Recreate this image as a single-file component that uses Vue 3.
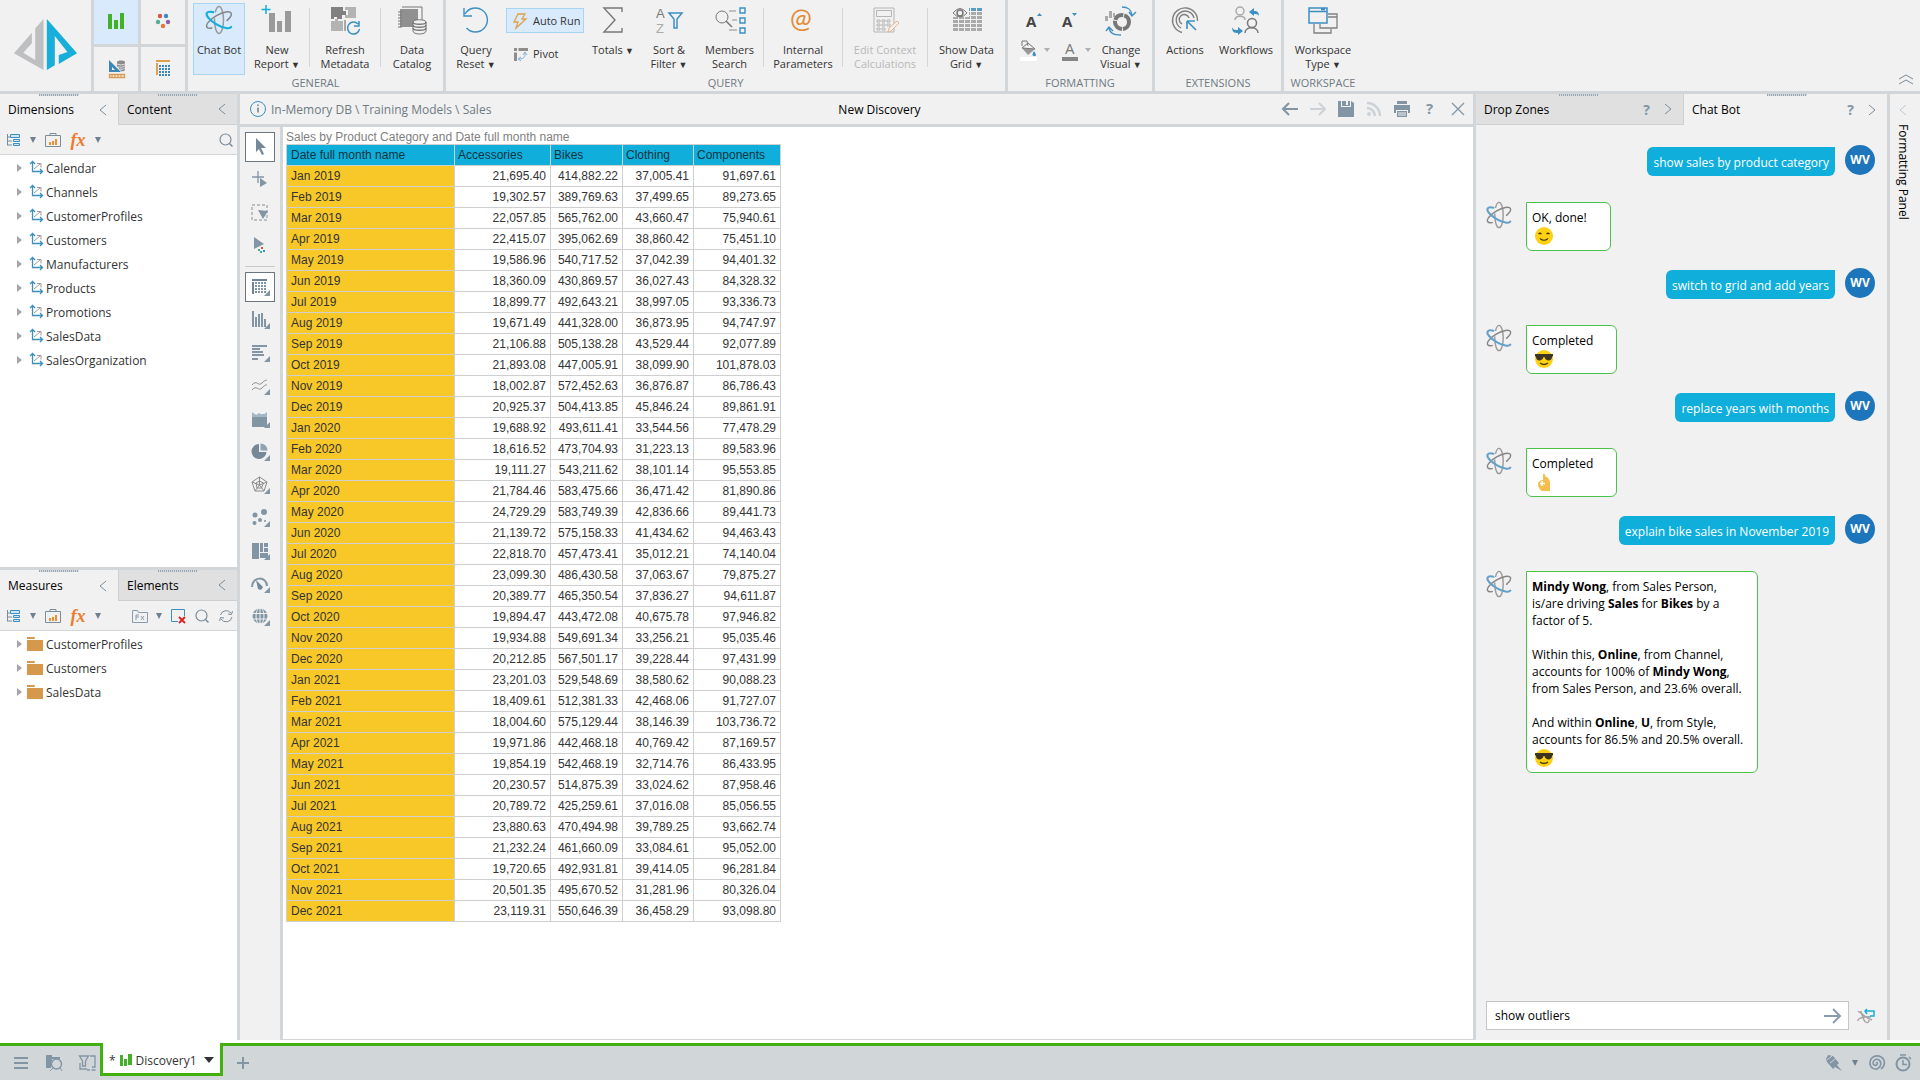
<template>
   <div class="app">
      <header class="ribbon">
         <div class="logo">
            <svg viewBox="0 0 274 270" width="91" height="90">
               <path fill="#bdbfc1" d="M96 98L42 160L131 210V57L106 85V180L70 158L96 130Z" />
               <path fill="#17aeda" d="M141 57L232 160L177 192V165L203 156L165 108V196L141 210Z" />
            </svg>
         </div>
         <div class="modes">
            <button
               v-for="mode in modes"
               :key="mode"
               class="mode"
               :class="{ active: mode === 'discover' }"
               :aria-label="mode"
            >
               <svg viewBox="0 0 20 20" width="20" height="20" v-html="icons[mode]"></svg>
            </button>
         </div>
         <section v-for="group in ribbon" :key="group.title" class="group">
            <div class="group-items">
               <template v-for="item in group.items" :key="item.name">
                  <div v-if="item.type === 'run'" class="run-tools">
                     <button class="run-button active">
                        <svg viewBox="0 0 18 18" width="18" height="18" v-html="icons.bolt"></svg>
                        Auto Run
                     </button>
                     <button class="run-button">
                        <svg viewBox="0 0 18 18" width="18" height="18" v-html="icons.pivot"></svg>
                        Pivot
                     </button>
                  </div>
                  <div v-else-if="item.type === 'font'" class="font-tools">
                     <button aria-label="Increase font">
                        <svg viewBox="0 0 22 20" width="22" height="20">
                           <text x="6" y="14" class="font-letter">A</text>
                           <path d="M17 3l2.500-3 2.500 3z" fill="#3b8fc2" />
                        </svg>
                     </button>
                     <button aria-label="Decrease font">
                        <svg viewBox="0 0 22 20" width="22" height="20">
                           <text x="1" y="14" class="font-letter">A</text>
                           <path d="M11 0h5l-2.500 3z" fill="#3b8fc2" />
                        </svg>
                     </button>
                     <button class="with-caret" aria-label="Fill colour">
                        <svg viewBox="0 0 18 22" width="18" height="22" v-html="icons.bucket"></svg>
                        <span class="soft-caret"></span>
                     </button>
                     <button class="with-caret" aria-label="Font colour">
                        <svg viewBox="0 0 18 22" width="18" height="22">
                           <text x="4" y="15" class="color-letter">A</text>
                           <path d="M1 18h16v4H1z" fill="#858585" />
                        </svg>
                        <span class="soft-caret"></span>
                     </button>
                  </div>
                  <span v-else-if="item.type === 'line'" class="group-line"></span>
                  <button
                     v-else
                     class="tool"
                     :class="{ active: item.active }"
                     :disabled="item.disabled"
                     :style="{ width: item.width + 'px' }"
                  >
                     <svg viewBox="0 0 32 32" width="32" height="32" v-html="icons[item.icon]"></svg>
                     <span class="tool-label">
                        <span v-for="(line, i) in item.label" :key="line">
                           {{ line }}<i v-if="item.menu && i === item.label.length - 1"> ▼</i>
                        </span>
                     </span>
                  </button>
               </template>
            </div>
            <div class="group-title">{{ group.title }}</div>
         </section>
         <button class="collapse" aria-label="Collapse ribbon">
            <svg viewBox="0 0 16 12" width="16" height="12">
               <path d="M1 6l7-4 7 4M1 11l7-4 7 4" fill="none" stroke="#7c8a96" />
            </svg>
         </button>
      </header>

      <main class="workspace">
         <aside class="side">
            <section v-for="panel in panels" :key="panel.tabs[0]" class="side-panel">
               <div class="tabs">
                  <button
                     v-for="(tab, i) in panel.tabs"
                     :key="tab"
                     class="tab"
                     :class="{ inactive: i > 0 }"
                  >
                     {{ tab }}
                     <svg class="chevron" viewBox="0 0 8 12" width="8" height="12">
                        <path d="M7 1L1 6l6 5" />
                     </svg>
                  </button>
               </div>
               <div class="panel-tools">
                  <button aria-label="Tree view">
                     <svg viewBox="0 0 16 16" width="16" height="16" v-html="icons.tree"></svg>
                  </button>
                  <span class="caret"></span>
                  <button aria-label="Quick chart">
                     <svg viewBox="0 0 16 16" width="16" height="16" v-html="icons.case"></svg>
                  </button>
                  <button class="fx" aria-label="Formula">fx</button>
                  <span class="caret"></span>
                  <div class="panel-tools-right">
                     <template v-if="panel.full">
                        <button aria-label="Folder">
                           <svg viewBox="0 0 16 16" width="16" height="16" v-html="icons.fxFolder"></svg>
                        </button>
                        <span class="caret"></span>
                        <button aria-label="Delete">
                           <svg viewBox="0 0 16 16" width="16" height="16" v-html="icons.remove"></svg>
                        </button>
                     </template>
                     <button aria-label="Search">
                        <svg viewBox="0 0 16 16" width="16" height="16" v-html="icons.search"></svg>
                     </button>
                     <button v-if="panel.full" aria-label="Refresh">
                        <svg viewBox="0 0 16 16" width="16" height="16" v-html="icons.sync"></svg>
                     </button>
                  </div>
               </div>
               <ul class="tree">
                  <li v-for="name in panel.items" :key="name">
                     <span class="expander"></span>
                     <svg viewBox="0 0 16 16" width="16" height="16" v-html="icons[panel.icon]"></svg>
                     {{ name }}
                  </li>
               </ul>
            </section>
         </aside>

         <section class="discovery">
            <div class="discovery-header">
               <div class="path">
                  <svg viewBox="0 0 18 18" width="18" height="18">
                     <circle cx="9" cy="9" r="7.500" fill="none" stroke="#3b8fc2" />
                     <path d="M9 7.500v5M9 4.500v1.500" stroke="#6f7f8c" stroke-width="1.500" />
                  </svg>
                  In-Memory DB \ Training Models \ Sales
               </div>
               <h1>New Discovery</h1>
               <div class="header-actions">
                  <button v-for="name in headerActions" :key="name" :aria-label="name">
                     <svg viewBox="0 0 18 18" width="18" height="18" v-html="icons[name]"></svg>
                  </button>
               </div>
            </div>
            <div class="discovery-body">
               <nav class="visuals">
                  <template v-for="name in visuals" :key="name">
                     <span v-if="name === 'line'" class="visual-line"></span>
                     <button
                        v-else
                        class="visual"
                        :class="{ selected: name === 'pointer' || name === 'grid' }"
                        :aria-label="name"
                     >
                        <svg viewBox="0 0 20 20" width="20" height="20" v-html="icons[name]"></svg>
                     </button>
                  </template>
               </nav>
               <div class="canvas">
                  <table>
                     <caption>Sales by Product Category and Date full month name</caption>
                     <thead>
                        <tr>
                           <th v-for="column in columns" :key="column" scope="col">{{ column }}</th>
                        </tr>
                     </thead>
                     <tbody>
                        <tr v-for="row in rows" :key="row[0]">
                           <th scope="row">{{ row[0] }}</th>
                           <td v-for="value in row.slice(1)" :key="value">{{ value }}</td>
                        </tr>
                     </tbody>
                  </table>
               </div>
            </div>
         </section>

         <aside class="chat">
            <div class="tabs">
               <button class="tab inactive">
                  Drop Zones
                  <span class="help">?</span>
                  <svg class="chevron" viewBox="0 0 8 12" width="8" height="12">
                     <path d="M1 1l6 5-6 5" />
                  </svg>
               </button>
               <button class="tab">
                  Chat Bot
                  <span class="help">?</span>
                  <svg class="chevron" viewBox="0 0 8 12" width="8" height="12">
                     <path d="M1 1l6 5-6 5" />
                  </svg>
               </button>
            </div>
            <div class="messages">
               <div v-for="(message, i) in messages" :key="i" class="message" :class="message.from">
                  <template v-if="message.from === 'user'">
                     <div class="bubble">{{ message.text }}</div>
                     <div class="avatar">WV</div>
                  </template>
                  <template v-else>
                     <svg class="bot" viewBox="0 0 32 32" width="30" height="30" v-html="icons.atom"></svg>
                     <div class="bubble" :class="{ long: message.long }">
                        <p v-for="(line, n) in message.lines" :key="n">
                           <component
                              :is="part.bold ? 'b' : 'span'"
                              v-for="(part, k) in splitBold(line)"
                              :key="k"
                              >{{ part.text }}</component
                           >
                        </p>
                        <svg class="emoji" viewBox="0 0 18 18" width="18" height="18" v-html="icons[message.emoji]"></svg>
                     </div>
                  </template>
               </div>
            </div>
            <form class="ask" @submit.prevent="send">
               <div class="ask-box">
                  <input v-model="question" type="text" aria-label="Ask the chat bot" />
                  <button type="submit" aria-label="Send">
                     <svg viewBox="0 0 18 16" width="18" height="16">
                        <path d="M0 8h16M9 1l7 7-7 7" fill="none" stroke="#8a9cab" stroke-width="2" />
                     </svg>
                  </button>
               </div>
               <button type="button" aria-label="Reset chat">
                  <svg viewBox="0 0 18 18" width="18" height="18" v-html="icons.resetBot"></svg>
               </button>
            </form>
         </aside>

         <aside class="formatting">
            <svg class="chevron" viewBox="0 0 8 12" width="8" height="12">
               <path d="M7 1L1 6l6 5" />
            </svg>
            <span>Formatting Panel</span>
         </aside>
      </main>

      <footer class="status">
         <div class="status-left">
            <button v-for="name in ['menu', 'browse', 'flow']" :key="name" :aria-label="name">
               <svg viewBox="0 0 18 18" width="18" height="18" v-html="icons[name]"></svg>
            </button>
         </div>
         <button class="document">
            <span>*</span>
            <svg viewBox="0 0 12 12" width="12" height="12">
               <path d="M0 1h3v11H0zM4 5h3v7H4zM8 0h4v11H8z" fill="#43b02a" />
            </svg>
            Discovery1
            <i></i>
         </button>
         <button class="add" aria-label="Add">
            <svg viewBox="0 0 12 12" width="12" height="12">
               <path d="M6 0v12M0 6h12" stroke="#8195a5" stroke-width="2" />
            </svg>
         </button>
         <div class="status-right">
            <button aria-label="Pin">
               <svg viewBox="0 0 18 18" width="18" height="18" v-html="icons.pin"></svg>
            </button>
            <span class="caret"></span>
            <button aria-label="Activity">
               <svg viewBox="0 0 18 18" width="18" height="18" v-html="icons.spiral"></svg>
            </button>
            <button aria-label="Timer">
               <svg viewBox="0 0 18 18" width="18" height="18" v-html="icons.timer"></svg>
            </button>
         </div>
      </footer>
   </div>
</template>

<script setup>
import { ref } from "vue";

const question = ref("show outliers");

const modes = ["discover", "present", "model", "tabulate"];

const ribbon = [
   {
      title: "GENERAL",
      items: [
         { name: "chat", icon: "atomBlue", label: ["Chat Bot"], width: 52, active: true },
         { name: "report", icon: "report", label: ["New", "Report"], width: 64, menu: true },
         { name: "l1", type: "line" },
         { name: "meta", icon: "metadata", label: ["Refresh", "Metadata"], width: 70 },
         { name: "l2", type: "line" },
         { name: "catalog", icon: "catalog", label: ["Data", "Catalog"], width: 62 },
      ],
   },
   {
      title: "QUERY",
      items: [
         { name: "reset", icon: "undo", label: ["Query", "Reset"], width: 60, menu: true },
         { name: "run", type: "run" },
         { name: "totals", icon: "sigma", label: ["Totals"], width: 58, menu: true },
         { name: "sort", icon: "sort", label: ["Sort &", "Filter"], width: 54, menu: true },
         { name: "members", icon: "members", label: ["Members", "Search"], width: 67 },
         { name: "l1", type: "line" },
         { name: "params", icon: "at", label: ["Internal", "Parameters"], width: 78 },
         { name: "l2", type: "line" },
         { name: "context", icon: "calc", label: ["Edit Context", "Calculations"], width: 84, disabled: true },
         { name: "l3", type: "line" },
         { name: "grid", icon: "dataGrid", label: ["Show Data", "Grid"], width: 77, menu: true },
      ],
   },
   {
      title: "FORMATTING",
      items: [
         { name: "font", type: "font" },
         { name: "visual", icon: "change", label: ["Change", "Visual"], width: 62, menu: true },
      ],
   },
   {
      title: "EXTENSIONS",
      items: [
         { name: "actions", icon: "actions", label: ["Actions"], width: 60 },
         { name: "workflows", icon: "workflows", label: ["Workflows"], width: 62 },
      ],
   },
   {
      title: "WORKSPACE",
      items: [{ name: "type", icon: "windows", label: ["Workspace", "Type"], width: 78, menu: true }],
   },
];

const panels = [
   {
      tabs: ["Dimensions", "Content"],
      icon: "axes",
      items: [
         "Calendar",
         "Channels",
         "CustomerProfiles",
         "Customers",
         "Manufacturers",
         "Products",
         "Promotions",
         "SalesData",
         "SalesOrganization",
      ],
   },
   {
      tabs: ["Measures", "Elements"],
      icon: "folder",
      full: true,
      items: ["CustomerProfiles", "Customers", "SalesData"],
   },
];

const headerActions = ["back", "forward", "save", "feed", "print", "question", "close"];

const visuals = [
   "pointer",
   "addPointer",
   "marquee",
   "dotPointer",
   "line",
   "grid",
   "columns",
   "bars",
   "lines",
   "area",
   "pie",
   "radar",
   "scatter",
   "treemap",
   "gauge",
   "globe",
];

const columns = ["Date full month name", "Accessories", "Bikes", "Clothing", "Components"];

const rows = [
   ["Jan 2019", "21,695.40", "414,882.22", "37,005.41", "91,697.61"],
   ["Feb 2019", "19,302.57", "389,769.63", "37,499.65", "89,273.65"],
   ["Mar 2019", "22,057.85", "565,762.00", "43,660.47", "75,940.61"],
   ["Apr 2019", "22,415.07", "395,062.69", "38,860.42", "75,451.10"],
   ["May 2019", "19,586.96", "540,717.52", "37,042.39", "94,401.32"],
   ["Jun 2019", "18,360.09", "430,869.57", "36,027.43", "84,328.32"],
   ["Jul 2019", "18,899.77", "492,643.21", "38,997.05", "93,336.73"],
   ["Aug 2019", "19,671.49", "441,328.00", "36,873.95", "94,747.97"],
   ["Sep 2019", "21,106.88", "505,138.28", "43,529.44", "92,077.89"],
   ["Oct 2019", "21,893.08", "447,005.91", "38,099.90", "101,878.03"],
   ["Nov 2019", "18,002.87", "572,452.63", "36,876.87", "86,786.43"],
   ["Dec 2019", "20,925.37", "504,413.85", "45,846.24", "89,861.91"],
   ["Jan 2020", "19,688.92", "493,611.41", "33,544.56", "77,478.29"],
   ["Feb 2020", "18,616.52", "473,704.93", "31,223.13", "89,583.96"],
   ["Mar 2020", "19,111.27", "543,211.62", "38,101.14", "95,553.85"],
   ["Apr 2020", "21,784.46", "583,475.66", "36,471.42", "81,890.86"],
   ["May 2020", "24,729.29", "583,749.39", "42,836.66", "89,441.73"],
   ["Jun 2020", "21,139.72", "575,158.33", "41,434.62", "94,463.43"],
   ["Jul 2020", "22,818.70", "457,473.41", "35,012.21", "74,140.04"],
   ["Aug 2020", "23,099.30", "486,430.58", "37,063.67", "79,875.27"],
   ["Sep 2020", "20,389.77", "465,350.54", "37,836.27", "94,611.87"],
   ["Oct 2020", "19,894.47", "443,472.08", "40,675.78", "97,946.82"],
   ["Nov 2020", "19,934.88", "549,691.34", "33,256.21", "95,035.46"],
   ["Dec 2020", "20,212.85", "567,501.17", "39,228.44", "97,431.99"],
   ["Jan 2021", "23,201.03", "529,548.69", "38,580.62", "90,088.23"],
   ["Feb 2021", "18,409.61", "512,381.33", "42,468.06", "91,727.07"],
   ["Mar 2021", "18,004.60", "575,129.44", "38,146.39", "103,736.72"],
   ["Apr 2021", "19,971.86", "442,468.18", "40,769.42", "87,169.57"],
   ["May 2021", "19,854.19", "542,468.19", "32,714.76", "86,433.95"],
   ["Jun 2021", "20,230.57", "514,875.39", "33,024.62", "87,958.46"],
   ["Jul 2021", "20,789.72", "425,259.61", "37,016.08", "85,056.55"],
   ["Aug 2021", "23,880.63", "470,494.98", "39,789.25", "93,662.74"],
   ["Sep 2021", "21,232.24", "461,660.09", "33,084.61", "95,052.00"],
   ["Oct 2021", "19,720.65", "492,931.81", "39,414.05", "96,281.84"],
   ["Nov 2021", "20,501.35", "495,670.52", "31,281.96", "80,326.04"],
   ["Dec 2021", "23,119.31", "550,646.39", "36,458.29", "93,098.80"],
];

const messages = ref([
   { from: "user", text: "show sales by product category" },
   { from: "reply", lines: ["OK, done!"], emoji: "smile" },
   { from: "user", text: "switch to grid and add years" },
   { from: "reply", lines: ["Completed"], emoji: "cool" },
   { from: "user", text: "replace years with months" },
   { from: "reply", lines: ["Completed"], emoji: "okHand" },
   { from: "user", text: "explain bike sales in November 2019" },
   {
      from: "reply",
      long: true,
      emoji: "cool",
      lines: [
         "*Mindy Wong*, from Sales Person,",
         "is/are driving *Sales* for *Bikes* by a",
         "factor of 5.",
         "",
         "Within this, *Online*, from Channel,",
         "accounts for 100% of *Mindy Wong*,",
         "from Sales Person, and 23.6% overall.",
         "",
         "And within *Online*, *U*, from Style,",
         "accounts for 86.5% and 20.5% overall.",
      ],
   },
]);

// every odd piece between asterisks is bold
const splitBold = (line) => line.split("*").map((text, i) => ({ text, bold: i % 2 === 1 }));

const send = () => {
   if (!question.value) return;
   messages.value.push({ from: "user", text: question.value });
   question.value = "";
};

// three crossed orbits, each one left open
const atom = (blue) => `
   <g fill="none" stroke-linecap="round">
      <ellipse cx="16" cy="16" rx="13.500" ry="4.500" transform="rotate(90 16 16)" stroke="#9a9a9a" stroke-width="1.500" stroke-dasharray="16 7 40"/>
      <ellipse cx="16" cy="16" rx="14" ry="5" transform="rotate(-30 16 16)" stroke="#858585" stroke-width="1.500" stroke-dasharray="9 17 50"/>
      <ellipse cx="16" cy="16" rx="14" ry="5" transform="rotate(30 16 16)" stroke="${blue}" stroke-width="2.200" stroke-dasharray="38 60"/>
   </g>`;

const corner = '<path d="M20 13v6h-6z" fill="#8195a5"/>';

const face = '<circle cx="9" cy="9" r="9" fill="#fcd116"/>';

const gridCells = () => {
   let cells = "";
   for (let y = 0; y < 6; y++) {
      for (let x = 0; x < 5; x++) {
         cells += `<path d="M${2 + x * 6} ${4 + y * 4}h5v3h-5z" fill="${y === 0 && x > 1 ? "#5b9cc7" : "#aaa"}"/>`;
      }
   }
   return cells;
};

const dots = (color, from, step, size) => {
   let out = "";
   for (let y = 0; y < 4; y++) {
      for (let x = 0; x < 4; x++) {
         out += `<path d="M${from + x * step} ${from + y * step}h${size}v${size}h-${size}z" fill="${color}"/>`;
      }
   }
   return out;
};

const icons = {
   discover: '<path d="M2 2h4v15H2zM8 8h4v9H8zM14 1h4v16h-4z" fill="#43b02a"/>',
   present:
      '<circle cx="7" cy="4" r="2.200" fill="#d9534a"/><circle cx="13" cy="4" r="2.200" fill="#3f87c6"/><circle cx="5" cy="10" r="2.200" fill="#55ad96"/><circle cx="15" cy="10" r="2.200" fill="#8e5ea9"/><circle cx="10" cy="14" r="2.200" fill="#e2763c"/>',
   model:
      '<path d="M11 3c0-2 8-2 8 0v8c-1 2-4 1-4 1l-4-5z" fill="#8b8b8b"/><path d="M11 5q4 2 8 0M12 8q4 1 7-1M14 10q3 1 5-1" stroke="#e0e0e0" fill="none"/><path d="M3 1v12h12zM6 8l3 3H6z" fill="#3b87ba" fill-rule="evenodd"/><path d="M3.500 15.500h15v3h-15zM6 16v1.500M9 16v1.500M12 16v1.500M15 16v1.500" stroke="#d79a4e" fill="none" stroke-width="1.300"/>',
   tabulate:
      '<path d="M3 1h14v2H3zM3 4h2v12H3z" fill="#dca052"/>' + dots("#3b87ba", 6, 3, 2),
   atom: atom("#63a1c9"),
   atomBlue: atom("#15aeda"),
   report:
      '<path d="M5 1v9M0.500 5.500h9" stroke="#15aeda" stroke-width="1.500"/><path d="M8 9h6v19H8zM16 17h5v11h-5zM24 7h6v21h-6z" fill="#9a9a9a"/>',
   metadata:
      '<path d="M2 3h12v4h3v4h-4v4H8v-2H5v2H2z" fill="#808080"/><path d="M16 3h11v11H16v-3h3V6h-3zM2 17h4v-2h3v2h5v10H2z" fill="#b3b3b3"/><path d="M18 16h-3v11h3z" fill="#a8a8a8"/><path d="M17 16h14v14H17z" fill="#f1f1f1"/><path d="M29 20a6 6 0 1 0 1.500 5M30 17v5h-5" fill="none" stroke="#3b8fc2" stroke-width="1.500"/>',
   catalog:
      '<path d="M4 5h18v18H4z" fill="#909090"/><path d="M6 3h20v14M2 8h4M2 11h4M2 14h4M2 17h4M2 20h4M2 23h4" stroke="#777" fill="none"/><path d="M17 18v9c0 4 13 4 13 0v-9c0-3-13-3-13 0z" fill="#f1f1f1" stroke="#777"/><path d="M17 18c0 3 13 3 13 0M17 21c0 3 13 3 13 0M17 24c0 3 13 3 13 0" fill="none" stroke="#777" stroke-width="1.500"/>',
   undo: '<path d="M5 10A12 12 0 1 1 6.500 24M4 4v8h8" fill="none" stroke="#3b8fc2" stroke-width="1.400"/>',
   sigma: '<path d="M25 8V4H7l11 12L7 28h18v-4" fill="none" stroke="#777" stroke-width="1.400"/>',
   sort: '<text x="3" y="14" font-size="13" font-family="Liberation Sans" fill="#777">A</text><text x="3" y="29" font-size="13" font-family="Liberation Sans" fill="#aaa">Z</text><path d="M16 9h13l-5 6v9h-3v-9z" fill="none" stroke="#3b8fc2" stroke-width="1.500"/>',
   members:
      '<circle cx="8" cy="13" r="6" fill="none" stroke="#777"/><path d="M12 17l6 6" stroke="#777" stroke-width="1.500"/><path d="M15 7h7M18 16h5M15 26h8" stroke="#8f8f8f"/><path d="M26 4h5v5h-5zM26 14h5v5h-5zM26 24h5v5h-5z" fill="none" stroke="#3b8fc2" stroke-width="1.400"/>',
   at: '<text x="3" y="24" font-size="26" font-family="Lato" fill="#e28a33">@</text>',
   calc: '<g fill="none" stroke="#b5b5b5"><path d="M5 4h20v24H5zM7.500 6.500h15v6h-15z"/><path d="M8 16h3v2H8zM13 16h3v2h-3zM18 16h3v2h-3zM8 20h3v2H8zM13 20h3v2h-3zM18 20h3v2h-3zM8 24h3v2H8zM13 24h3v2h-3z"/></g><path d="M19 28l1-4 8-7 2 2-8 8z" fill="#f1f1f1" stroke="#e8b58c"/>',
   dataGrid:
      gridCells() +
      '<path d="M1 3h17v10H1z" fill="#f1f1f1"/><path d="M2 9q7-9 14 0q-7 8-14 0z" fill="none" stroke="#777"/><circle cx="9" cy="9" r="3" fill="none" stroke="#777" stroke-width="1.500"/>',
   bolt: '<path d="M7 2h7l-3 5h4L5 16l2-6H3z" fill="none" stroke="#e2a046" stroke-width="1.300"/>',
   pivot: '<path d="M3 3h3v3H3zM7.500 3H17v3H7.500zM3 7.500h3V16H3z" fill="#8d8d8d"/><path d="M8 14c5 0 6-2 6-6M12 10l2-3 2 3M10 12l-3 2 3 2" fill="none" stroke="#7db3d6"/>',
   bucket:
      '<path d="M0 18h17v4H0z" fill="#fff"/><path d="M2 9L8 4l7 6-7 6z" fill="#999"/><path d="M2 9L8 4l7 6z" fill="#f5f5f5" stroke="#777"/><path d="M2 7V2h5l1 5" fill="none" stroke="#777"/><path d="M14 12q4 6 0 5q-3 0 0-5z" fill="#3b8fc2"/>',
   change:
      '<path d="M0 12h3v5H0zM4 7h3v7H4zM8 9h2v4H8z" fill="#aaa"/><circle cx="17" cy="18" r="7" fill="none" stroke="#777" stroke-width="4" stroke-dasharray="10 1 12 1"/><path d="M17 3c6 0 9 2 10 8M24 8l3 4 4-4M16 31C8 31 5 29 4 24M1 27l3-4 4 4" fill="none" stroke="#3b8fc2" stroke-width="1.400"/>',
   actions:
      '<g fill="none" stroke="#808080" stroke-width="1.400"><path d="M13 28.500A12.500 12.500 0 1 1 28.500 17"/><path d="M12 24A9 9 0 1 1 25 14"/><path d="M13 20a5 5 0 1 1 7-6"/></g><path d="M18 17v8M18 17h8M18 17l9 9" stroke="#3b8fc2" stroke-width="1.600" fill="none"/>',
   workflows:
      '<g fill="none" stroke-width="1.500"><g stroke="#aaa"><circle cx="10" cy="7" r="4"/><path d="M5 16c0-5 10-5 10 0"/></g><g stroke="#777"><circle cx="22" cy="19" r="4.500"/><path d="M15 29c0-7 13-7 13 0"/></g></g><path d="M19 8l5-4v3c4 0 5 2 5 5-1-2-3-2-5-2v2zM13 27l-5-4v3c-3 0-5 0-6-3 0 5 2 6 6 6v2z" fill="#3b8fc2"/>',
   windows:
      '<path d="M2 4h18v15H2zM2 7.500h18M14 5.500h4" fill="none" stroke="#3b8fc2" stroke-width="1.500"/><path d="M21 10h9v14H13v-4M21 13h9M7 20v9h17v-4" fill="none" stroke="#808080" stroke-width="1.300"/>',
   tree: '<path d="M2.500 2v11M2 5h4M2 9h5M2 13h5" stroke="#7b8c9a" fill="none"/><path d="M5.500 2.500h9v3h-9zM8.500 7.500h6v2h-6zM8.500 11.500h6v2h-6z" fill="#d3e7f3" stroke="#3b8fc2"/>',
   case: '<path d="M.5 3.500h15v11H.5zM5 3V1.500h6V3" fill="none" stroke="#7b8c9a"/><path d="M4 10h2v3H4zM7 9h2v4H7zM10 7h2v6h-2z" fill="#ee8f34"/>',
   fxFolder:
      '<path d="M.5 14.500V2.500h5l1 2h9v10z" fill="none" stroke="#8a9cab"/><path d="M4 12V7h3M4 9h3M9 8l3 4M12 8l-3 4" stroke="#8a9cab" fill="none"/>',
   remove: '<path d="M14.500 8V1.500h-13v12H8" fill="none" stroke="#3b8fc2"/><path d="M9 9l6 6M15 9l-6 6" stroke="#e01e1e" stroke-width="1.800"/>',
   search: '<circle cx="7.500" cy="7.500" r="5.500" fill="none" stroke="#7b8c9a" stroke-width="1.200"/><path d="M11.500 11.500l3 3" stroke="#7b8c9a" stroke-width="1.500"/>',
   sync: '<path d="M2.500 7A6 6 0 0 1 13 5M14 9A6 6 0 0 1 3 11M14.500 3l-1 3.500L10 6M1.500 13l1-3.500L6 10" fill="none" stroke="#7b8c9a"/>',
   axes: '<path d="M5.500 2v9.500H15M3 4l2.500-2.500L8 4M13 9l2.500 2.500L13 14" fill="none" stroke="#3b8fc2" stroke-width="1.300"/><path d="M7 9l6-5M10 3.500h4v4" fill="none" stroke="#999"/>',
   folder: '<path d="M0 1h7l1 1v1H0zM0 4h16v11H0z" fill="#d6984a"/>',
   back: '<path d="M17 9H3M8 3L2 9l6 6" fill="none" stroke="#8195a5" stroke-width="2"/>',
   forward: '<path d="M1 9h14M10 3l6 6-6 6" fill="none" stroke="#ccd2d7" stroke-width="2"/>',
   save: '<path d="M1 1h3v6h10V1l3 2v14H1z" fill="#8195a5"/><path d="M5 1h8v5H5z" fill="#8195a5"/><path d="M9 1h2v4H9zM4 1h1v6H4z" fill="#f1f1f1"/>',
   feed: '<circle cx="4" cy="14" r="2" fill="#ccd2d7"/><path d="M2 8a8 8 0 0 1 8 8M2 3a13 13 0 0 1 13 13" stroke="#ccd2d7" stroke-width="2.500" fill="none"/>',
   print: '<path d="M4 1h10v3H4zM1 5h16v8h-2v-3H3v3H1zM4 11h10v6H4z" fill="#8195a5"/><path d="M5 13h8M5 15h8" stroke="#f1f1f1"/>',
   question: '<text x="5" y="14" font-size="15" font-weight="700" font-family="Open Sans" fill="#8195a5">?</text>',
   close: '<path d="M3 3l12 12M15 3L3 15" stroke="#8195a5" stroke-width="1.300"/>',
   pointer: '<path d="M6 1v14l3-3 3 6 2-1-3-6h5z" fill="#74889a"/>',
   addPointer: '<path d="M8 1v12M2 7h12" stroke="#8195a5" stroke-width="1.300"/><path d="M10 8v9l7-4z" fill="#8195a5"/>',
   marquee: '<path d="M2 2h15v15H2z" fill="none" stroke="#8c8c8c" stroke-dasharray="3 2"/><path d="M8 7l10 1-5 8z" fill="#8195a5"/>',
   dotPointer:
      '<path d="M4 1v12l10-5z" fill="#8195a5"/><path d="M8 13h2v2H8zM10 15h2v2h-2z" fill="#3fae8c"/><path d="M11 11h2v2h-2z" fill="#e0522f"/><path d="M13 14h2v2h-2z" fill="#3b8fc2"/>',
   grid: '<path d="M2 2h15v2H2zM2 5h2v12H2z" fill="#6f8396"/>' + dots("#8195a5", 5, 3, 2) + corner,
   columns: '<path d="M2 1h2v16H2zM5 7h2v10H5zM8 4h2v13H8zM11 3h2v14h-2zM14 9h2v8h-2z" fill="#8195a5"/>' + corner,
   bars: '<path d="M2 2h15v2H2zM2 5h8v2H2zM2 8h11v2H2zM2 11h12v2H2zM2 15h6v2H2z" fill="#8195a5"/>' + corner,
   lines: '<path d="M2 9c5-6 6 2 10-2s4-2 5-3M2 14c5-6 6 2 10-2s4-3 5-3" fill="none" stroke="#8c8c8c"/>' + corner,
   area: '<path d="M2 4l4 2 3 2 4-3 4 1v12H2z" fill="#8195a5"/><path d="M2 3l4 3 3-2 4 2 4-3v5H2z" fill="#a3b8c6"/>' + corner,
   pie: '<path d="M9 2a7.500 7.500 0 1 0 7.500 8H9z" fill="#74889a"/><path d="M10.500 1.500V8.500h7a7 7 0 0 0-7-7z" fill="#8fa2b1"/>' + corner,
   radar: '<path d="M9.500 2L17 7l-3 9H5L2 7zM9.500 6l4 2-2 5H7L6 8zM9.500 2v8L17 7M2 7l7.500 3L5 16M9.500 10l4.500 6" fill="none" stroke="#8c8c8c"/>' + corner,
   scatter:
      '<g fill="#8195a5"><circle cx="5" cy="7" r="2.500"/><circle cx="14" cy="4" r="3"/><circle cx="10" cy="12" r="2"/><circle cx="4.500" cy="15" r="2"/><circle cx="15" cy="13" r="1"/></g>' + corner,
   treemap: '<path d="M2 2h7v16H2zM10 2h3v9h-3zM14 2h4v4h-4zM14 7h4v4h-4zM10 12h8v5h-8z" fill="#8195a5"/>' + corner,
   gauge: '<path d="M2 13C2 2 17 2 17 12" fill="none" stroke="#8195a5" stroke-width="2"/><path d="M6 6l7 7-2 3-3-1z" fill="#74889a"/>' + corner,
   globe: '<circle cx="10" cy="9" r="7.500" fill="#8195a5"/><path d="M10 1v16M2 6.500h16M2 12h16" stroke="#f1f1f1"/><ellipse cx="10" cy="9" rx="4" ry="8" fill="none" stroke="#f1f1f1"/>' + corner,
   smile: face + '<path d="M3.500 7q1.500-1.500 3 0M11.500 7q1.500-1.500 3 0M5 11.500q4 3.500 8 0" fill="none" stroke="#4a3a12" stroke-width="1.200"/>',
   cool: face + '<path d="M0 4h18v2l-1 1c0 5-7 4-7.500 0h-1C8 11 1 12 1 7L0 6z" fill="#3d3422"/><path d="M5 13q4 3 8 0" fill="none" stroke="#4a3a12" stroke-width="1.300"/>',
   okHand:
      '<path d="M8 1c2-1 2 2 3 3 2 0 3 2 4 5v9H7c-2-1-4-4-4-7 0-2 2-4 5-4z" fill="#f5bf4f"/><path d="M7 8v5M5 10.500h5" stroke="#fff" stroke-width="1.500"/>',
   resetBot:
      '<path d="M1 5c2-2 6 6 14 8M1 14c-1-3 8-5 13-4M4 4c0 2 2 6 3 9s5 4 5 0" fill="none" stroke="#a5a5a5" stroke-width="1.400"/><path d="M8 4h9v5h-4M10 2L8 4l2 3" fill="none" stroke="#15aeda" stroke-width="1.500"/>',
   menu: '<path d="M2 4h14M2 9h14M2 14h14" stroke="#8195a5" stroke-width="2"/>',
   browse: '<path d="M1 14V1h6v2h8v2H1z" fill="#8195a5"/><path d="M1 5h6l-1 9H1z" fill="#8195a5"/><circle cx="11.500" cy="10" r="5" fill="#d1d6d9" stroke="#8195a5" stroke-width="1.400"/><path d="M8 14l-3 3M15 14l2 3" stroke="#8195a5"/>',
   flow: '<path d="M1.500 2h9l-3 5v5h-3V7zM12 2h5v11h-3M2 9v6h7M9 16h3M13.500 16h4" fill="none" stroke="#8195a5" stroke-width="1.300"/>',
   pin: '<path d="M3 1l5 1 6 7-2 2 5 6-7-4-2 2-6-7-1-3z" fill="#8195a5"/><path d="M2 6l5-4M5 9l5-4" stroke="#d1d6d9"/>',
   spiral: '<path d="M9 9c1-1 2 0 1 1.500s-4 1-4-1.500 3-5 6-3 2 7-1 8.500-8 0-8-5.500 6-9 11-6 4 9 0 12" fill="none" stroke="#8195a5" stroke-width="1.600"/>',
   timer: '<circle cx="9" cy="10" r="6.500" fill="none" stroke="#8195a5" stroke-width="2"/><path d="M9 6v4.500h4M6 1h6M15 3l2 2" fill="none" stroke="#8195a5" stroke-width="1.500"/>',
};
</script>

<style>
body {
   margin: 0;
}
</style>

<style scoped>
.app {
   display: flex;
   flex-direction: column;
   min-height: 100vh;
   background-color: #fff;
   font-family: "Open Sans", "Liberation Sans", sans-serif;
   font-size: 12px;
   color: #333;
}

.app *,
.app *::before {
   box-sizing: border-box;
}

button {
   border: 0;
   padding: 0;
   background: none;
   font: inherit;
   color: inherit;
   cursor: pointer;
}

svg {
   display: block;
   flex: none;
   overflow: visible;
}

/* Ribbon */
.ribbon {
   display: flex;
   height: 94px;
   background-color: #f1f1f1;
   border-bottom: 3px solid #d3d6d8;
   box-sizing: border-box;
}

.logo {
   flex: none;
}

.modes {
   display: grid;
   grid-template-columns: 44px 44px;
   grid-template-rows: 44px 44px;
   gap: 3px;
   padding: 0 3px;
   background-color: #d3d6d8;
}

.mode {
   display: flex;
   align-items: center;
   justify-content: center;
   background-color: #f1f1f1;
}

.mode.active {
   background-color: #d8eafb;
}

.group {
   display: flex;
   flex-direction: column;
   border-right: 3px solid #d3d6d8;
}

.group:last-of-type {
   border-right: 0;
}

.group-items {
   display: flex;
   height: 75px;
   padding-top: 3px;
}

.group:first-of-type .group-items {
   padding-left: 5px;
}

.group:nth-of-type(4) .group-items {
   padding-right: 4px;
}

.tool {
   display: flex;
   flex-direction: column;
   align-items: center;
   border: 1px solid transparent;
   height: 72px;
   font-size: 11px;
   line-height: 14px;
}

.tool.active {
   background-color: #d8eafb;
   border-color: #a8d5f2;
}

.tool:disabled {
   color: #b8b8b8;
}

.tool-label {
   display: flex;
   flex-direction: column;
   padding-top: 7px;
   white-space: nowrap;
}

.tool-label i {
   font-style: normal;
   font-size: 9px;
}

.group-line {
   width: 1px;
   height: 59px;
   margin-top: 5px;
   background-color: #d3d6d8;
}

.group-title {
   color: #6f7a82;
   font-size: 11px;
   line-height: 16px;
   text-align: center;
}

.run-tools {
   display: flex;
   flex-direction: column;
   gap: 8px;
   width: 78px;
   padding-top: 5px;
}

.run-button {
   display: flex;
   align-items: center;
   gap: 4px;
   height: 25px;
   padding-left: 4px;
   border: 1px solid transparent;
   font-size: 11px;
   white-space: nowrap;
}

.run-button.active {
   background-color: #d8eafb;
   border-color: #a8d5f2;
}

.font-tools {
   display: grid;
   grid-template-columns: 41px 29px;
   grid-template-rows: 30px 24px;
   align-content: start;
   width: 82px;
   padding-top: 5px;
   padding-left: 12px;
}

.font-letter {
   font-family: "Open Sans", sans-serif;
   font-size: 15px;
   font-weight: 700;
   fill: #444;
}

.color-letter {
   font-family: "Open Sans", sans-serif;
   font-size: 15px;
   fill: #777;
}

.with-caret {
   display: flex;
   align-items: center;
   gap: 6px;
}

.soft-caret {
   border: 3px solid transparent;
   border-top: 4px solid #b0b0b0;
   border-bottom: 0;
}

.collapse {
   align-self: flex-end;
   margin: 0 6px 6px auto;
}

/* Tabs */
.workspace {
   display: flex;
   flex: 1;
   padding-bottom: 3px;
}

.tabs {
   display: flex;
}

.tab {
   position: relative;
   display: flex;
   flex: 1;
   align-items: center;
   gap: 14px;
   height: 31px;
   padding: 0 11px 0 8px;
   border: 0 solid #d0d0d0;
   background-color: #f1f1f1;
   color: #000;
   font-weight: 500;
   text-align: left;
}

.tab::before {
   content: "";
   position: absolute;
   top: 0;
   left: 39px;
   width: 40px;
   height: 2px;
   background: repeating-linear-gradient(to right, #98a5b0 0 1px, #d8dde1 1px 2px);
}

.tab.inactive {
   background-color: #e0e0e0;
   border-bottom-width: 1px;
}

.side .tab.inactive {
   border-left-width: 1px;
}

.chevron {
   margin-left: auto;
}

.chevron path {
   fill: none;
   stroke: #7b8c9a;
}

/* Left panels */
.side {
   display: flex;
   flex-direction: column;
   flex: 0 0 240px;
   border-right: 3px solid #d3d6d8;
}

.side-panel {
   flex: 0 0 50%;
}

.side-panel + .side-panel {
   flex: 1;
   border-top: 3px solid #d3d6d8;
}

.panel-tools {
   display: flex;
   align-items: center;
   gap: 9px;
   height: 30px;
   padding: 0 3px 0 5px;
   background-color: #f1f1f1;
   border-bottom: 1px solid #d3d6d8;
}

.panel-tools-right {
   display: flex;
   align-items: center;
   gap: 8px;
   margin-left: auto;
}

.caret {
   border: 3px solid transparent;
   border-top: 6px solid #6f8090;
   border-bottom: 0;
}

.fx {
   width: 16px;
   color: #f07a2c;
   font-family: "Liberation Serif", serif;
   font-size: 18px;
   font-style: italic;
   font-weight: 700;
   line-height: 18px;
}

.tree {
   margin: 0;
   padding: 1px 0 0 17px;
   list-style: none;
}

.tree li {
   display: flex;
   align-items: center;
   gap: 3px;
   height: 24px;
}

.expander {
   margin-right: 2px;
   border: 4px solid transparent;
   border-left: 5px solid #a6a6a6;
   border-right: 0;
}

/* Discovery */
.discovery {
   display: flex;
   flex: 1;
   flex-direction: column;
   min-width: 0;
   border-right: 3px solid #d3d6d8;
}

.discovery-header {
   display: grid;
   grid-template-columns: 1fr auto 1fr;
   align-items: center;
   height: 33px;
   padding: 0 6px 0 9px;
   background-color: #f1f1f1;
   border-bottom: 3px solid #d3d6d8;
}

.discovery-header h1 {
   margin: 0;
   padding-left: 43px;
   color: #000;
   font-size: 12px;
   font-weight: 500;
}

.path {
   display: flex;
   align-items: center;
   gap: 4px;
   color: #6f7a82;
}

.header-actions {
   display: flex;
   justify-content: flex-end;
   gap: 10px;
}

.discovery-body {
   display: flex;
   flex: 1;
}

.visuals {
   display: flex;
   flex: 0 0 43px;
   flex-direction: column;
   gap: 3px;
   padding: 5px;
   background-color: #f1f1f1;
   border-right: 3px solid #d3d6d8;
}

.visual {
   display: flex;
   align-items: center;
   justify-content: center;
   width: 30px;
   height: 30px;
   border: 1px solid transparent;
}

.visual.selected {
   background-color: #fff;
   border-color: #6b7680;
}

.visual-line {
   width: 30px;
   height: 1px;
   margin: 2px 0;
   background-color: #c8c8c8;
}

.canvas {
   flex: 1;
   padding: 0 3px;
   border-bottom: 1px solid #d3d6d8;
}

table {
   width: 495px;
   table-layout: fixed;
   border-collapse: collapse;
   font-family: "Liberation Sans", sans-serif;
   font-size: 12px;
   line-height: 20px;
}

caption {
   height: 17px;
   color: #7f7f7f;
   line-height: 20px;
   text-align: left;
   white-space: nowrap;
}

th,
td {
   height: 21px;
   padding: 0 4px 0 3px;
   border: 1px solid #cfcfcf;
}

th {
   font-weight: 400;
   text-align: left;
   white-space: nowrap;
}

th:first-child {
   padding-left: 4px;
}

thead th {
   background-color: #10aeda;
   color: #12343f;
}

thead th:nth-child(1) {
   width: 168px;
}

thead th:nth-child(2) {
   width: 96px;
}

thead th:nth-child(3) {
   width: 72px;
}

thead th:nth-child(4) {
   width: 71px;
}

tbody th {
   background-color: #f8c829;
}

td {
   text-align: right;
}

/* Chat */
.chat {
   display: flex;
   flex: 0 0 414px;
   flex-direction: column;
   background-color: #f1f1f1;
   border-right: 3px solid #d3d6d8;
}

.chat .tab::before {
   left: 83px;
}

.chat .tab.inactive {
   flex: 0 0 208px;
   border-right-width: 1px;
}

.help {
   margin-left: auto;
   color: #8195a5;
   font-size: 14px;
   font-weight: 700;
}

.help + .chevron {
   margin-left: 0;
}

.messages {
   flex: 1;
   padding: 20px 12px 0 8px;
}

.message {
   display: flex;
   align-items: flex-start;
}

.message.user {
   justify-content: flex-end;
   gap: 10px;
   height: 30px;
   margin-bottom: 26px;
}

.message.reply {
   gap: 12px;
   margin-bottom: 17px;
}

.bubble {
   margin-top: 2px;
   padding: 7px 6px 5px;
   border-radius: 6px 0 6px 6px;
   background-color: #10aeda;
   color: #fff;
   line-height: 17px;
   white-space: nowrap;
}

.reply .bubble {
   margin-top: 1px;
   padding: 6px 23px 5px 5px;
   border: 1px solid #4cc24a;
   border-radius: 0 6px 6px 6px;
   background-color: #fff;
   color: #000;
}

.reply .bubble.long {
   padding-right: 14px;
}

.bubble p {
   min-height: 17px;
   margin: 0;
}

.emoji {
   margin: 1px 0 0 3px;
}

.bot {
   margin-top: -1px;
}

.avatar {
   width: 30px;
   border-radius: 50%;
   background-color: #1d76bb;
   color: #fff;
   font-weight: 700;
   line-height: 30px;
   text-align: center;
}

.ask {
   display: flex;
   align-items: center;
   gap: 8px;
   padding: 0 12px 10px 10px;
}

.ask-box {
   display: flex;
   flex: 1;
   align-items: center;
   height: 29px;
   padding: 0 6px 0 8px;
   border: 1px solid #c6c6c6;
   background-color: #fff;
}

.ask-box input {
   flex: 1;
   min-width: 0;
   padding: 0;
   border: 0;
   outline: 0;
   background: none;
   color: #000;
   font: inherit;
}

.formatting {
   display: flex;
   flex: 0 0 30px;
   flex-direction: column;
   align-items: center;
   gap: 8px;
   padding-top: 10px;
   padding-right: 4px;
   background-color: #f1f1f1;
   color: #000;
   font-weight: 500;
}

.formatting .chevron {
   margin: 0;
   opacity: 0.4;
}

.formatting span {
   writing-mode: vertical-rl;
}

/* Status bar */
.status {
   display: flex;
   box-sizing: border-box;
   height: 37px;
   border-top: 3px solid #43b010;
   background-color: #d1d6d9;
}

.status-left {
   display: flex;
   gap: 15px;
   width: 100px;
   padding-left: 12px;
}

.document {
   display: flex;
   align-items: center;
   gap: 4px;
   width: 123px;
   height: 33px;
   margin-top: -3px;
   padding: 4px 6px 0;
   border: 3px solid #43b010;
   border-top: 0;
   background-color: #fff;
}

.document i {
   margin-left: auto;
   border: 5px solid transparent;
   border-top: 6px solid #333;
   border-bottom: 0;
}

.add {
   margin-left: 14px;
}

.status-right {
   display: flex;
   align-items: center;
   gap: 9px;
   margin-left: auto;
   padding-right: 8px;
}
</style>
